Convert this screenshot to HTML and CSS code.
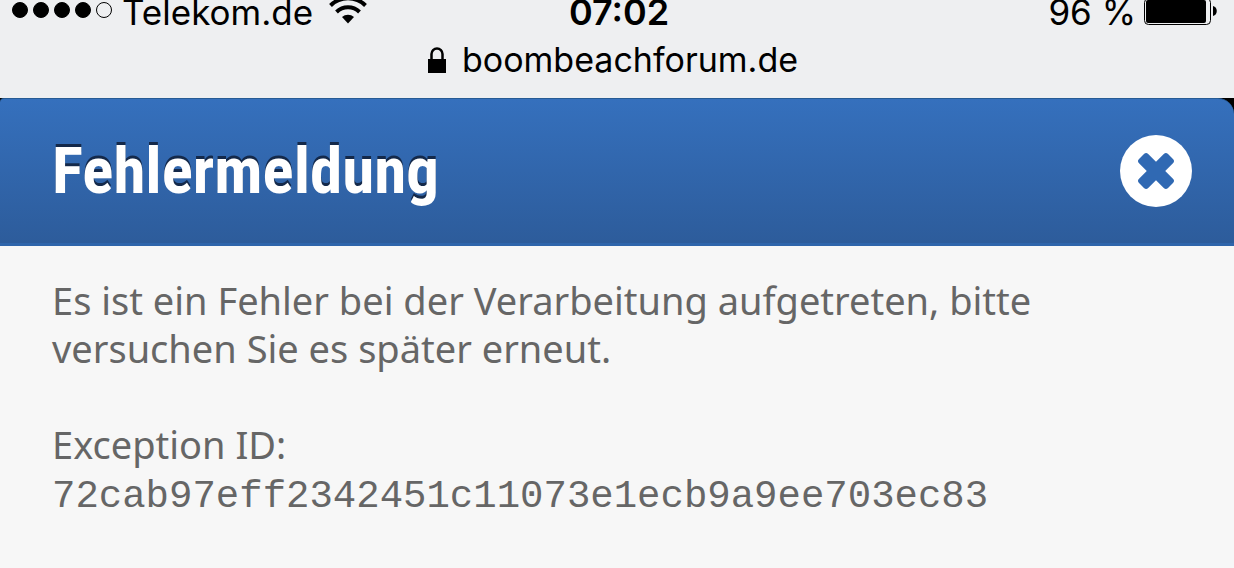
FILE: index.html
```html
<!DOCTYPE html>
<html lang="de">
<head>
    <meta charset="UTF-8">
    <meta name="viewport" content="width=device-width, initial-scale=1.0">
    <title>Fehlermeldung</title>
    <link rel="stylesheet" href="styles.css">
</head>
<body>
    <!-- Browser bar -->
    <div class="browser-bar">
        <div class="status">
            <div class="carrier">
                <div class="signal">
                    <span class="dot"></span>
                    <span class="dot"></span>
                    <span class="dot"></span>
                    <span class="dot"></span>
                    <span class="dot empty"></span>
                </div>
                <span>Telekom.de</span>
                <svg class="wifi" width="38" height="28" viewBox="0 0 38 28" fill="none" stroke="#000" stroke-width="4" aria-hidden="true">
                    <path d="M1.500 9.500a25 25 0 0 1 35 0"/>
                    <path d="M7.500 16a16.500 16.500 0 0 1 23 0"/>
                    <path d="M19 27.500l-6-6.500a9 9 0 0 1 12 0z" fill="#000" stroke="none"/>
                </svg>
            </div>
            <div class="time">07:02</div>
            <div class="power">
                <span>96 %</span>
                <svg class="battery" width="74" height="28" viewBox="0 0 74 28" aria-hidden="true">
                    <rect x="0.500" y="0.500" width="66" height="26" rx="4" fill="none" stroke="#000"/>
                    <rect x="2" y="2" width="60" height="23" rx="2"/>
                    <path d="M69 8c5 1 5 9 0 10z"/>
                </svg>
            </div>
        </div>
        <div class="address">
            <svg width="18" height="26" viewBox="0 0 18 26" aria-hidden="true">
                <path d="M3.500 12V7a5.500 5.500 0 0 1 11 0v5" fill="none" stroke="#000" stroke-width="2.500"/>
                <path d="M0 12h18v14H0z"/>
            </svg>
            <span>boombeachforum.de</span>
        </div>
    </div>

    <!-- Error dialog -->
    <main class="dialog">
        <header class="dialog-header">
            <h1>Fehlermeldung</h1>
            <button type="button" class="close" aria-label="Schließen">
                <svg width="72" height="72" viewBox="0 0 72 72" aria-hidden="true">
                    <circle cx="36" cy="36" r="36" fill="#fff"/>
                    <g fill="#3069b3" transform="rotate(45 36 36)">
                        <rect x="15.500" y="29.500" width="41" height="13" rx="3"/>
                        <rect x="29.500" y="15.500" width="13" height="41" rx="3"/>
                    </g>
                </svg>
            </button>
        </header>
        <div class="dialog-body">
            <p>Es ist ein Fehler bei der Verarbeitung aufgetreten, bitte versuchen Sie es später erneut.</p>
            <p>Exception ID:<br><code>72cab97eff2342451c11073e1ecb9a9ee703ec83</code></p>
        </div>
    </main>
</body>
</html>
```
FILE: styles.css
```css
body {
    margin: 0;
    background-color: #f7f7f7;
    color: #666;
}
.browser-bar {
    background-color: #eeeff1;
    color: #000;
    font-family: Inter, sans-serif;
    font-size: 34px;
    padding-bottom: 14px;
}
.status {
    display: grid;
    grid-template-columns: 1fr auto 1fr;
    grid-template-rows: 24px;
    padding: 0 16px 0 12px;
    font-size: 35px;
    line-height: 24px;
}
.carrier,
.power {
    display: flex;
    align-items: center;
    gap: 10px;
}
.power {
    justify-content: flex-end;
    gap: 8px;
}
.signal {
    display: flex;
    gap: 5px;
    padding-bottom: 4px;
}
.dot {
    box-sizing: border-box;
    width: 16px;
    height: 16px;
    border: 1px solid #000;
    border-radius: 50%;
    background-color: #000;
}
.dot.empty {
    background-color: transparent;
}
.wifi {
    margin-left: 6px;
    padding-bottom: 4px;
}
.time {
    padding-left: 8px;
    font-size: 36px;
    font-weight: 600;
}
.address {
    display: flex;
    justify-content: center;
    align-items: center;
    gap: 16px;
    line-height: 48px;
    padding: 12px 8px 0 0;
}
.dialog {
    background-color: #000;
}
.dialog-header {
    display: flex;
    justify-content: space-between;
    align-items: center;
    height: 144px;
    padding: 0 42px 0 52px;
    border-top: 1px solid #265b94;
    border-bottom: 3px solid #2f65ab;
    border-radius: 4px 16px 0 0;
    background: linear-gradient(#3570bd, #2d5c9b);
}
.dialog-header h1 {
    margin: 0;
    color: #fff;
    font-family: "Roboto Condensed", "Liberation Sans", sans-serif;
    font-size: 65px;
    font-weight: bold;
    line-height: 72px;
    text-shadow: 0 -3px 0 #14294a;
}
.close {
    padding: 0;
    border: 0;
    background: none;
    cursor: pointer;
}
.close svg {
    display: block;
}
.dialog-body {
    padding: 30px 52px 24px;
    font-family: "Trebuchet MS", "Noto Sans", sans-serif;
    font-size: 38px;
    line-height: 48px;
    background-color: #f7f7f7;
}
.dialog-body p {
    margin: 0 0 48px;
}
.dialog-body p:last-child {
    margin-bottom: 0;
}
.dialog-body code {
    font-family: "Liberation Mono", monospace;
    font-size: 39px;
}
```
